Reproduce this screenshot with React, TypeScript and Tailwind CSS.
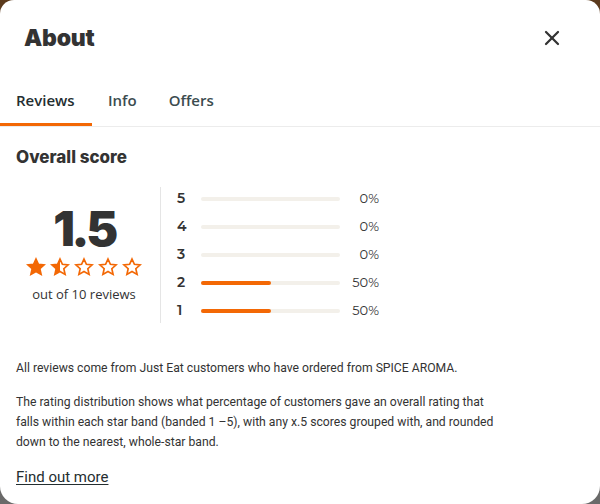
import { X } from "lucide-react";

const distribution = [
  { band: 5, pct: 0 },
  { band: 4, pct: 0 },
  { band: 3, pct: 0 },
  { band: 2, pct: 50 },
  { band: 1, pct: 50 },
];

function Star({ fill }: { fill: "full" | "half" | "empty" }) {
  const d =
    "M12 2.5l2.9 6.3 6.8.7-5.1 4.6 1.5 6.8L12 17.4l-6.1 3.5 1.5-6.8-5.1-4.6 6.8-.7z";
  return (
    <svg width="20" height="20" viewBox="0 0 24 24" className="shrink-0">
      <defs>
        <clipPath id="half-clip">
          <rect x="0" y="0" width="12" height="24" />
        </clipPath>
      </defs>
      {fill === "full" ? <path d={d} fill="#f36805" /> : null}
      {fill === "half" ? <path d={d} fill="#f36805" clipPath="url(#half-clip)" /> : null}
      <path d={d} fill="none" stroke="#f36805" strokeWidth="2" strokeLinejoin="miter" />
    </svg>
  );
}

export default function App() {
  return (
    <div className="h-[504px] w-[600px] bg-gradient-to-b from-[#5b3a1c] to-[#6a6a6a]">
      <div className="flex h-full w-full flex-col rounded-t-[14px] rounded-b-[18px] bg-white text-[#242e30]">
        <div className="flex items-center justify-between pl-6 pr-9 pt-[22px]">
          <h2 className="font-['Inter',sans-serif] text-[23px] font-black leading-8 tracking-[-0.01em] text-[#333]">
            About
          </h2>
          <X className="h-6 w-6 text-[#333]" strokeWidth={2.25} />
        </div>
        <div className="mt-[35px] flex border-b border-[#ececec] font-['Open_Sans',sans-serif] text-[15px] font-semibold">
          <div className="w-[92px] border-b-[3px] border-[#f36805] pb-[11px] pl-4 text-[#242e30]">Reviews</div>
          <div className="ml-4 pb-[11px] text-[#3c4c4f]">Info</div>
          <div className="ml-8 pb-[11px] text-[#3c4c4f]">Offers</div>
        </div>
        <div className="px-4">
          <h3 className="mt-[18px] font-['Inter',sans-serif] text-[17px] font-extrabold leading-6 text-[#333]">
            Overall score
          </h3>
          <div className="mt-[18px] flex">
            <div className="flex w-[145px] flex-col items-center justify-center border-r border-[#e5e5e5] pr-2">
              <div className="font-['Inter',sans-serif] text-[48px] font-black leading-[50px] tracking-[-0.07em] text-[#333]">
                1.5
              </div>
              <div className="mt-[3px] flex gap-[4px]">
                <Star fill="full" />
                <Star fill="half" />
                <Star fill="empty" />
                <Star fill="empty" />
                <Star fill="empty" />
              </div>
              <div className="mt-[8px] font-['Open_Sans',sans-serif] text-[13px] text-[#333]">out of 10 reviews</div>
            </div>
            <div className="flex flex-col gap-[10px] py-[3px] pl-4 font-['Montserrat','Open_Sans',sans-serif]">
              {distribution.map((row) => (
                <div key={row.band} className="flex h-[18px] items-center">
                  <span className="w-6 text-[14px] font-semibold text-[#333]">{row.band}</span>
                  <div className="h-[4px] w-[139px] rounded-full bg-[#f3f0ea]">
                    <div className="h-full rounded-full bg-[#f36805]" style={{ width: `${row.pct}%` }} />
                  </div>
                  <span className="w-[39px] text-right text-[13px] text-[#333]">{row.pct}%</span>
                </div>
              ))}
            </div>
          </div>
          <div className="mt-[35px] max-w-[490px] font-['Roboto',sans-serif] text-[12.2px] leading-5 text-[#333]">
            <p>All reviews come from Just Eat customers who have ordered from SPICE AROMA.</p>
            <p className="mt-[14px]">
              The rating distribution shows what percentage of customers gave an overall rating that falls within each
              star band (banded 1 –5), with any x.5 scores grouped with, and rounded down to the nearest, whole-star band.
            </p>
            <a href="#" className="mt-[15px] inline-block text-[15px] text-[#242e30] underline underline-offset-2">
              Find out more
            </a>
          </div>
        </div>
      </div>
    </div>
  );
}
